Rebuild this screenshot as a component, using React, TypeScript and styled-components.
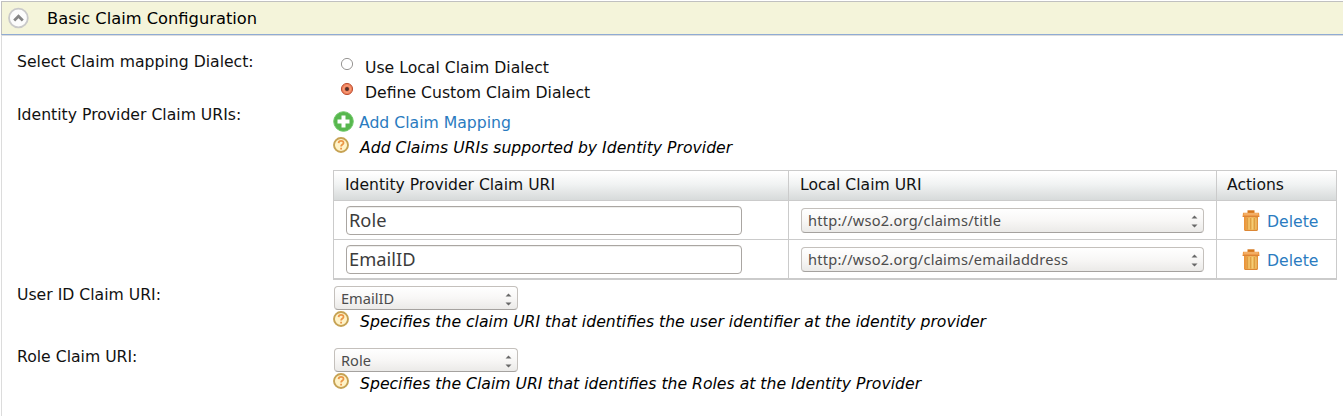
import React from "react";
import styled, { createGlobalStyle } from "styled-components";

const GlobalStyle = createGlobalStyle`
  * { box-sizing: border-box; }
  body {
    margin: 0;
    background: #fff;
    color: #111;
    font-family: "DejaVu Sans", sans-serif;
    font-size: 15.66px;
    line-height: 20px;
    overflow: hidden;
  }
`;

const Panel = styled.section`
  height: 415px;
  margin: 1px 0 0 1px;
  border-left: 1px solid #dcdcdc;
`;

const PanelHeader = styled.header`
  display: flex;
  align-items: center;
  height: 34px;
  margin-left: -1px;
  padding-left: 6px;
  gap: 17px;
  background: #f4f4da;
  border: 1px solid #c0c0c0;
  border-right: 0;
  border-bottom-color: #8fabd4;
  box-shadow: 0 1px 0 #dddddd;
  color: #000;
`;

const PanelTitle = styled.span`
  padding-top: 1px;
  font-size: 16.3px;
  white-space: nowrap;
`;

const Form = styled.div`
  padding: 16px 0 0 15px;
`;

const FormRow = styled.div<{ $height: number }>`
  display: grid;
  grid-template-columns: 316px 1004px;
  height: ${(p) => p.$height}px;
`;

const Label = styled.div`
  padding-top: 1px;
  white-space: nowrap;
`;

const Radios = styled.div`
  display: flex;
  flex-direction: column;
  gap: 5px;
  padding: 6px 0 0 7px;
`;

const RadioOption = styled.label`
  display: flex;
  gap: 11px;
  height: 20px;
  line-height: 22px;
  white-space: nowrap;
`;

const ActionLink = styled.a`
  display: flex;
  gap: 5px;
  color: #2a7bc0;
  white-space: nowrap;
`;

const AddLink = styled(ActionLink)`
  padding-top: 8px;
  height: 28px;
  line-height: 22px;
`;

const DeleteLink = styled(ActionLink)`
  gap: 7px;
  line-height: 24px;
`;

const Hint = styled.div<{ $top?: number }>`
  display: flex;
  gap: 11px;
  height: 20px;
  margin-top: ${(p) => p.$top ?? 0}px;
  font-style: italic;
  line-height: 22px;
  white-space: nowrap;
  color: #000;
`;

const ClaimTable = styled.div`
  width: 1004px;
  height: 110px;
  margin-top: 13px;
  border: 1px solid #cbcbcb;
  border-bottom-width: 2px;
`;

const TableRow = styled.div<{ $head?: boolean }>`
  display: grid;
  grid-template-columns: 455px 428px 119px;
  height: ${(p) => (p.$head ? 30 : 39)}px;
  background: ${(p) => (p.$head ? "linear-gradient(#ffffff 5%, #f1f3f3 45%, #d7dada)" : "#fff")};
  border-bottom: 1px solid #cbcbcb;
  &:last-child { border-bottom: 0; height: 38px; }
`;

const HeadCell = styled.div`
  padding: 4px 0 0 11px;
  border-right: 1px solid #cbcbcb;
  font-size: 15.6px;
  &:last-child { border-right: 0; padding-left: 10px; }
`;

const Cell = styled.div<{ $top: number }>`
  padding: ${(p) => p.$top}px 0 0 12px;
  border-right: 1px solid #cbcbcb;
  &:last-child { border-right: 0; padding-left: 25px; }
`;

const TextField = styled.input`
  display: block;
  width: 396px;
  height: 29px;
  padding: 0 2px 2px;
  border: 1px solid #aaa6a2;
  border-radius: 4px;
  background: #fff;
  box-shadow: inset 0 1px 0 #eeeeec;
  color: #3c3c3c;
  font: 18.3px "Noto Sans", sans-serif;
  outline: 0;
`;

const SelectBox = styled.div<{ $width: number; $height: number }>`
  display: flex;
  align-items: center;
  justify-content: space-between;
  width: ${(p) => p.$width}px;
  height: ${(p) => p.$height}px;
  padding: 0 5px 0 6px;
  border: 1px solid #c4c0bc;
  border-bottom-color: #a5a29f;
  border-radius: 4px;
  background: linear-gradient(#ffffff, #f8f7f6 50%, #ebeae8);
  color: #4c4c4c;
  font: 14.6px/20px "Noto Sans", sans-serif;
`;

const SelectText = styled.span<{ $wide: boolean }>`
  letter-spacing: ${(p) => (p.$wide ? "0.22px" : "0")};
  padding-bottom: ${(p) => (p.$wide ? 2 : 0)}px;
`;

const SelectWrap = styled.div`
  padding-top: 2px;
`;

const SelectInset = styled.div`
  padding-left: 1px;
`;

const Icon = styled.svg<{ $top?: number }>`
  display: block;
  flex: none;
  margin-top: ${(p) => p.$top ?? 0}px;
`;

const CollapseIcon = () => (
  <Icon width="22" height="22" viewBox="0 0 22 22">
    <circle cx="10.4" cy="11" r="9.4" fill="#fcfcfc" stroke="#c9c9c9" strokeWidth="1.8" />
    <path d="M6.2 13.4 10.5 9.2l4.3 4.2" fill="none" stroke="#858585" strokeWidth="2.8" />
  </Icon>
);

const RadioIcon = ({ checked }: { checked?: boolean }) => (
  <Icon width="14" height="14" viewBox="0 0 14 14">
    {checked ? (
      <>
        <circle cx="7" cy="7" r="5.6" fill="#f0805a" stroke="#bd5337" />
        <circle cx="7" cy="7" r="3.5" fill="none" stroke="#f8a27f" />
        <circle cx="7" cy="7" r="2" fill="#54302a" />
      </>
    ) : (
      <circle cx="7" cy="7" r="5.6" fill="#fff" stroke="#989694" />
    )}
  </Icon>
);

const AddIcon = () => (
  <Icon width="21" height="21" viewBox="0 0 21 21" $top={-1}>
    <circle cx="10.5" cy="10.5" r="9.8" fill="#57b74e" stroke="#72c96a" />
    <path d="M10.5 4.5v12M4.5 10.5h12" stroke="#fff" strokeWidth="4" />
  </Icon>
);

const HelpIcon = () => (
  <Icon width="16" height="16" viewBox="0 0 16 16">
    <circle cx="8" cy="8" r="7" fill="#fff3c8" stroke="#c6a253" strokeWidth="1.9" />
    <path d="M5.6 6.1c.1-3 4.9-3 4.9-.2 0 1.7-2.4 1.7-2.4 3.6M8.1 10.8v1.7" fill="none" stroke="#eb9546" strokeWidth="1.8" />
  </Icon>
);

const TrashIcon = () => (
  <Icon width="18" height="22" viewBox="0 0 18 22">
    <defs>
      <linearGradient id="bin">
        <stop stopColor="#e99137" />
        <stop offset=".45" stopColor="#f0b860" />
        <stop offset=".75" stopColor="#edb458" />
        <stop offset="1" stopColor="#e08a35" />
      </linearGradient>
    </defs>
    <path d="M5.5 0.3h7v2.7h-7z" fill="#d5761b" />
    <path d="M1 2.7h16l.5 4H.5z" fill="#ee9b48" />
    <path d="M2 4h14" stroke="#f7bf80" />
    <path d="M.8 6.5h16.4" stroke="#dc8436" />
    <path d="M2 7h14v12.5q0 1.5-1.5 1.5h-11Q2 21 2 19.5z" fill="url(#bin)" />
    <path d="M5.5 8v11.5M8.5 8v11.5M12.5 8v11.5" stroke="#d99a3c" strokeWidth=".8" />
    <path d="M7 8v11.5M10.5 8v11.5M14 8v11.5" stroke="#f4d47c" strokeWidth=".8" />
    <path d="M3 20.5h12" stroke="#dc8735" />
  </Icon>
);

const Select = ({ value, width, height = 25 }: { value: string; width: number; height?: number }) => (
  <SelectBox $width={width} $height={height}>
    <SelectText $wide={width > 200}>{value}</SelectText>
    <Icon width="7" height="13" viewBox="0 0 7 13" $top={2}>
      <path d="M.5 3.5 3.5.5l3 3zM.5 9.5l3 3 3-3z" fill="#686868" />
    </Icon>
  </SelectBox>
);

const HintLine = ({ children, top }: { children: React.ReactNode; top?: number }) => (
  <Hint $top={top}>
    <HelpIcon />
    <span>{children}</span>
  </Hint>
);

const claims = [
  { name: "Role", uri: "http://wso2.org/claims/title" },
  { name: "EmailID", uri: "http://wso2.org/claims/emailaddress" },
];

export default function App() {
  return (
    <>
      <GlobalStyle />
      <Panel>
        <PanelHeader>
          <CollapseIcon />
          <PanelTitle>Basic Claim Configuration</PanelTitle>
        </PanelHeader>
        <Form>
          <FormRow $height={53}>
            <Label>Select Claim mapping Dialect:</Label>
            <Radios>
              <RadioOption><RadioIcon />Use Local Claim Dialect</RadioOption>
              <RadioOption><RadioIcon checked />Define Custom Claim Dialect</RadioOption>
            </Radios>
          </FormRow>
          <FormRow $height={180}>
            <Label>Identity Provider Claim URIs:</Label>
            <div>
              <AddLink><AddIcon />Add Claim Mapping</AddLink>
              <HintLine top={5}>Add Claims URIs supported by Identity Provider</HintLine>
              <ClaimTable>
                <TableRow $head>
                  <HeadCell>Identity Provider Claim URI</HeadCell>
                  <HeadCell>Local Claim URI</HeadCell>
                  <HeadCell>Actions</HeadCell>
                </TableRow>
                {claims.map((c) => (
                  <TableRow key={c.name}>
                    <Cell $top={5}><TextField defaultValue={c.name} /></Cell>
                    <Cell $top={7}><Select value={c.uri} width={403} /></Cell>
                    <Cell $top={9}>
                      <DeleteLink><TrashIcon />Delete</DeleteLink>
                    </Cell>
                  </TableRow>
                ))}
              </ClaimTable>
            </div>
          </FormRow>
          <FormRow $height={62}>
            <Label>User ID Claim URI:</Label>
            <SelectWrap>
              <SelectInset><Select value="EmailID" width={184} height={24} /></SelectInset>
              <HintLine top={1}>Specifies the claim URI that identifies the user identifier at the identity provider</HintLine>
            </SelectWrap>
          </FormRow>
          <FormRow $height={62}>
            <Label>Role Claim URI:</Label>
            <SelectWrap>
              <SelectInset><Select value="Role" width={184} height={24} /></SelectInset>
              <HintLine top={1}>Specifies the Claim URI that identifies the Roles at the Identity Provider</HintLine>
            </SelectWrap>
          </FormRow>
        </Form>
      </Panel>
    </>
  );
}
